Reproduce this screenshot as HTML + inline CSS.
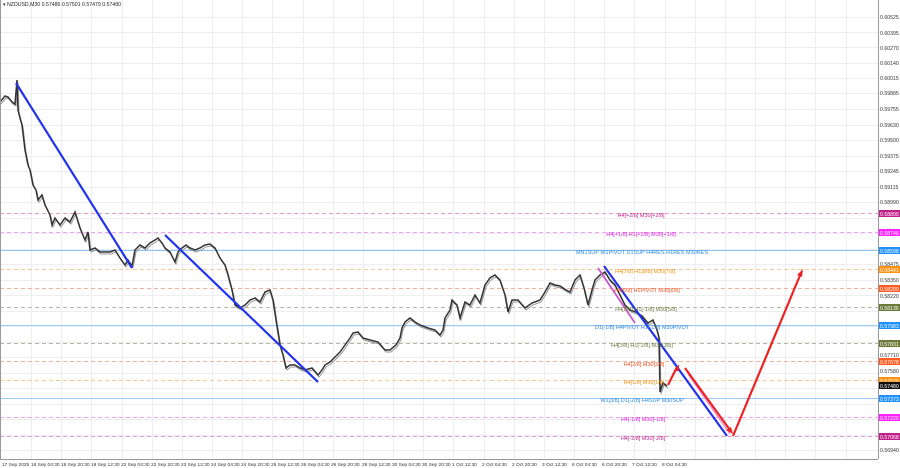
<!DOCTYPE html>
<html><head><meta charset="utf-8"><style>
html,body{margin:0;padding:0;background:#fff;}
svg{display:block;font-family:"Liberation Sans",sans-serif;}
</style></head><body>
<svg width="900" height="468" xmlns="http://www.w3.org/2000/svg">
<rect width="900" height="468" fill="#fff"/>
<g stroke="#eceef2" stroke-width="1">
<path d="M31.5 0V459M61.5 0V459M91.5 0V459M122.5 0V459M152.5 0V459M182.5 0V459M212.5 0V459M242.5 0V459M272.5 0V459M303.5 0V459M333.5 0V459M363.5 0V459M393.5 0V459M423.5 0V459M453.5 0V459M484.5 0V459M514.5 0V459M544.5 0V459M574.5 0V459M604.5 0V459M634.5 0V459M665.5 0V459M695.5 0V459M725.5 0V459M755.5 0V459M785.5 0V459M815.5 0V459M846.5 0V459"/>
<path d="M0 17.5H878M0 32.5H878M0 47.5H878M0 63.5H878M0 78.5H878M0 93.5H878M0 109.5H878M0 125.5H878M0 140.5H878M0 156.5H878M0 171.5H878M0 187.5H878M0 202.5H878M0 218.5H878M0 233.5H878M0 249.5H878M0 264.5H878M0 280.5H878M0 295.5H878M0 311.5H878M0 326.5H878M0 342.5H878M0 357.5H878M0 373.5H878M0 388.5H878M0 404.5H878M0 419.5H878M0 435.5H878M0 450.5H878"/>
</g>
<g stroke-width="1" fill="none">
<line x1="0" y1="213.5" x2="878" y2="213.5" stroke="#e89ad0" stroke-dasharray="4,3"/>
<line x1="0" y1="232.5" x2="878" y2="232.5" stroke="#f7a0f7" stroke-dasharray="4,3"/>
<line x1="0" y1="250.5" x2="878" y2="250.5" stroke="#8cc4f5"/>
<line x1="0" y1="269.5" x2="878" y2="269.5" stroke="#f7c89a" stroke-dasharray="4,3"/>
<line x1="0" y1="288.5" x2="878" y2="288.5" stroke="#f5b09a" stroke-dasharray="4,3"/>
<line x1="0" y1="307.5" x2="878" y2="307.5" stroke="#b8b8a0" stroke-dasharray="4,3"/>
<line x1="0" y1="325.5" x2="878" y2="325.5" stroke="#9ccbf5"/>
<line x1="0" y1="343.5" x2="878" y2="343.5" stroke="#b8b8a0" stroke-dasharray="4,3"/>
<line x1="0" y1="361.5" x2="878" y2="361.5" stroke="#f5b09a" stroke-dasharray="4,3"/>
<line x1="0" y1="380.5" x2="878" y2="380.5" stroke="#f7c89a" stroke-dasharray="4,3"/>
<line x1="0" y1="398.5" x2="878" y2="398.5" stroke="#9ccbf5"/>
<line x1="0" y1="417.5" x2="878" y2="417.5" stroke="#f7a0f7" stroke-dasharray="4,3"/>
<line x1="0" y1="436.5" x2="878" y2="436.5" stroke="#e89ad0" stroke-dasharray="4,3"/>
</g>
<polyline fill="none" stroke="#999" stroke-width="1" transform="translate(1,2)" points="0,102 5,96 8,97 12,102 15,104 17,80 18,110 20,118 22,125 25,150 28,165 30,170 33,185 36,190 38,200 42,195 45,205 50,215 52,225 55,218 60,225 65,218 70,222 75,212 80,228 85,240 88,232 90,250 95,248 100,252 110,252 115,250 120,258 125,265 128,260 132,266 135,250 140,245 145,248 150,243 155,240 158,238 162,243 165,248 170,252 175,262 178,252 182,248 186,245 190,248 195,250 200,248 205,245 210,244 215,248 220,258 225,265 228,275 232,290 235,305 240,308 245,305 250,300 255,298 260,302 265,292 270,290 273,300 276,320 280,345 283,355 286,368 290,365 295,365 300,368 305,370 312,368 318,375 322,370 325,365 330,362 335,357 340,352 345,345 350,338 353,333 358,332 363,338 370,340 378,342 385,350 390,350 396,345 400,338 402,328 405,322 410,318 415,322 420,325 428,328 435,330 440,335 443,330 445,318 450,310 452,300 457,305 460,318 465,302 470,305 475,295 480,303 485,285 490,278 495,275 500,280 505,295 508,312 512,300 518,300 525,308 532,303 540,300 545,292 550,283 555,285 560,286 566,290 570,292 575,280 580,275 584,288 588,305 592,290 595,280 600,275 605,272 610,280 615,285 620,295 625,305 630,310 636,312 642,316 648,323 653,320 657,330 659,338 660,392 663,383 667,386"/>
<polyline fill="none" stroke="#333" stroke-width="1.5" points="0,102 5,96 8,97 12,102 15,104 17,80 18,110 20,118 22,125 25,150 28,165 30,170 33,185 36,190 38,200 42,195 45,205 50,215 52,225 55,218 60,225 65,218 70,222 75,212 80,228 85,240 88,232 90,250 95,248 100,252 110,252 115,250 120,258 125,265 128,260 132,266 135,250 140,245 145,248 150,243 155,240 158,238 162,243 165,248 170,252 175,262 178,252 182,248 186,245 190,248 195,250 200,248 205,245 210,244 215,248 220,258 225,265 228,275 232,290 235,305 240,308 245,305 250,300 255,298 260,302 265,292 270,290 273,300 276,320 280,345 283,355 286,368 290,365 295,365 300,368 305,370 312,368 318,375 322,370 325,365 330,362 335,357 340,352 345,345 350,338 353,333 358,332 363,338 370,340 378,342 385,350 390,350 396,345 400,338 402,328 405,322 410,318 415,322 420,325 428,328 435,330 440,335 443,330 445,318 450,310 452,300 457,305 460,318 465,302 470,305 475,295 480,303 485,285 490,278 495,275 500,280 505,295 508,312 512,300 518,300 525,308 532,303 540,300 545,292 550,283 555,285 560,286 566,290 570,292 575,280 580,275 584,288 588,305 592,290 595,280 600,275 605,272 610,280 615,285 620,295 625,305 630,310 636,312 642,316 648,323 653,320 657,330 659,338 660,392 663,383 667,386"/>
<g stroke-width="2.2" fill="none">
<line x1="16" y1="83" x2="132" y2="268" stroke="#2233ee"/>
<line x1="165" y1="235" x2="318" y2="382" stroke="#2233ee"/>
<line x1="598" y1="268" x2="635" y2="323" stroke="#cc55cc" stroke-width="1.8"/>
<line x1="604" y1="266" x2="727" y2="436" stroke="#2233ee"/>
<line x1="688" y1="374" x2="730" y2="434" stroke="#dd88cc" stroke-width="1.2"/>
<line x1="685" y1="368" x2="730" y2="430" stroke="#ee2222"/>
<line x1="668" y1="385" x2="677" y2="367" stroke="#ee2222"/>
<line x1="733" y1="436" x2="801" y2="273" stroke="#ee2222"/>
</g>
<g fill="#ee2222"><path d="M679,364 L675,371 L679,371Z"/><path d="M733,434 L726,430 L731,427Z"/><path d="M803,269 L797,275 L802,277Z"/></g>
<g font-size="5.5" text-anchor="middle">
<text x="641" y="217" fill="#c0208a">H4[+2/8] M30[+2/8]</text>
<text x="641" y="236" fill="#e020e0">H4[+1/8] H1[+2/8] M30[+1/8]</text>
<text x="642" y="254" fill="#2a8ae0">MN1SUP W1PIVOT D1SUP H4RES H1RES M30RES</text>
<text x="645" y="273" fill="#f0900a">H4[7/8] H1[8/8] M30[7/8]</text>
<text x="647" y="292" fill="#f05020">H4[6/8] H1PIVOT M30[6/8]</text>
<text x="646" y="311" fill="#6b7a3a">H4[5/8] H1[-1/8] M30[5/8]</text>
<text x="642" y="329" fill="#2a8ae0">D1[-1/8] H4PIVOT H1[-1/8] M30PIVOT</text>
<text x="642" y="347" fill="#6b7a3a">H4[3/8] H1[-2/8] M30[3/8]</text>
<text x="644" y="366" fill="#f05020">H4[2/8] M30[2/8]</text>
<text x="644" y="384" fill="#f0900a">H4[1/8] M30[1/8]</text>
<text x="642" y="402" fill="#2a8ae0">W1[3/8] D1[-2/8] H4SUP M30SUP</text>
<text x="643" y="421" fill="#e020e0">H4[-1/8] M30[-1/8]</text>
<text x="643" y="440" fill="#c0208a">H4[-2/8] M30[-2/8]</text>
</g>
<line x1="878.5" y1="0" x2="878.5" y2="459" stroke="#999"/>
<line x1="0" y1="459.5" x2="878" y2="459.5" stroke="#999"/>
<line x1="0.5" y1="0" x2="0.5" y2="459" stroke="#999"/>
<g font-size="5.2" fill="#333">
<text x="880" y="19">0.60525</text><text x="880" y="35">0.60395</text><text x="880" y="50">0.60270</text><text x="880" y="65">0.60140</text><text x="880" y="80">0.60015</text><text x="880" y="95">0.59885</text><text x="880" y="111">0.59755</text><text x="880" y="127">0.59630</text><text x="880" y="142">0.59500</text><text x="880" y="158">0.59375</text><text x="880" y="173">0.59245</text><text x="880" y="189">0.59115</text><text x="880" y="204">0.58990</text><text x="880" y="266">0.58475</text><text x="880" y="282">0.58350</text><text x="880" y="298">0.58220</text><text x="880" y="357">0.57710</text><text x="880" y="373">0.57580</text><text x="880" y="452">0.56940</text>
</g>
<g font-size="5.2" fill="#fff">
<rect x="879" y="210" width="21" height="7" fill="#c0208a"/><text x="880" y="216">0.58899</text>
<rect x="879" y="229" width="21" height="7" fill="#ff20ff"/><text x="880" y="235">0.58746</text>
<rect x="879" y="247" width="21" height="7" fill="#1e90ff"/><text x="880" y="253">0.58598</text>
<rect x="879" y="266" width="21" height="7" fill="#ff9010"/><text x="880" y="272">0.58441</text>
<rect x="879" y="285" width="21" height="7" fill="#ff5a20"/><text x="880" y="291">0.58289</text>
<rect x="879" y="304" width="21" height="7" fill="#6b7a3a"/><text x="880" y="310">0.58136</text>
<rect x="879" y="322" width="21" height="7" fill="#1e90ff"/><text x="880" y="328">0.57983</text>
<rect x="879" y="340" width="21" height="7" fill="#6b7a3a"/><text x="880" y="346">0.57831</text>
<rect x="879" y="358" width="21" height="7" fill="#ff5a20"/><text x="880" y="364">0.57678</text>
<rect x="879" y="377" width="21" height="7" fill="#ff9010"/><text x="880" y="383">0.57526</text>
<rect x="879" y="382" width="21" height="7" fill="#111"/><text x="880" y="388">0.57480</text>
<rect x="879" y="395" width="21" height="7" fill="#1e90ff"/><text x="880" y="401">0.57373</text>
<rect x="879" y="414" width="21" height="7" fill="#ff20ff"/><text x="880" y="420">0.57220</text>
<rect x="879" y="433" width="21" height="7" fill="#c0208a"/><text x="880" y="439">0.57068</text>
</g>
<text x="3" y="6" font-size="5.2" fill="#222">▾ NZDUSD,M30  0.57486 0.57501 0.57479 0.57480</text>
<g font-size="4.8" fill="#333">
<text x="2" y="466">17 Sep 2025</text><text x="31" y="466">18 Sep 04:30</text><text x="61" y="466">18 Sep 20:30</text><text x="91" y="466">19 Sep 12:30</text><text x="121" y="466">22 Sep 04:30</text><text x="151" y="466">22 Sep 20:30</text><text x="181" y="466">23 Sep 12:30</text><text x="211" y="466">24 Sep 04:30</text><text x="241" y="466">24 Sep 20:30</text><text x="271" y="466">25 Sep 12:30</text><text x="301" y="466">26 Sep 04:30</text><text x="331" y="466">26 Sep 20:30</text><text x="362" y="466">29 Sep 12:30</text><text x="392" y="466">30 Sep 04:30</text><text x="422" y="466">30 Sep 20:30</text><text x="452" y="466">1 Oct 12:30</text><text x="482" y="466">2 Oct 04:30</text><text x="512" y="466">2 Oct 20:30</text><text x="542" y="466">3 Oct 12:30</text><text x="572" y="466">6 Oct 04:30</text><text x="602" y="466">6 Oct 20:30</text><text x="632" y="466">7 Oct 12:30</text><text x="662" y="466">8 Oct 04:30</text>
</g>
</svg>
</body></html>
